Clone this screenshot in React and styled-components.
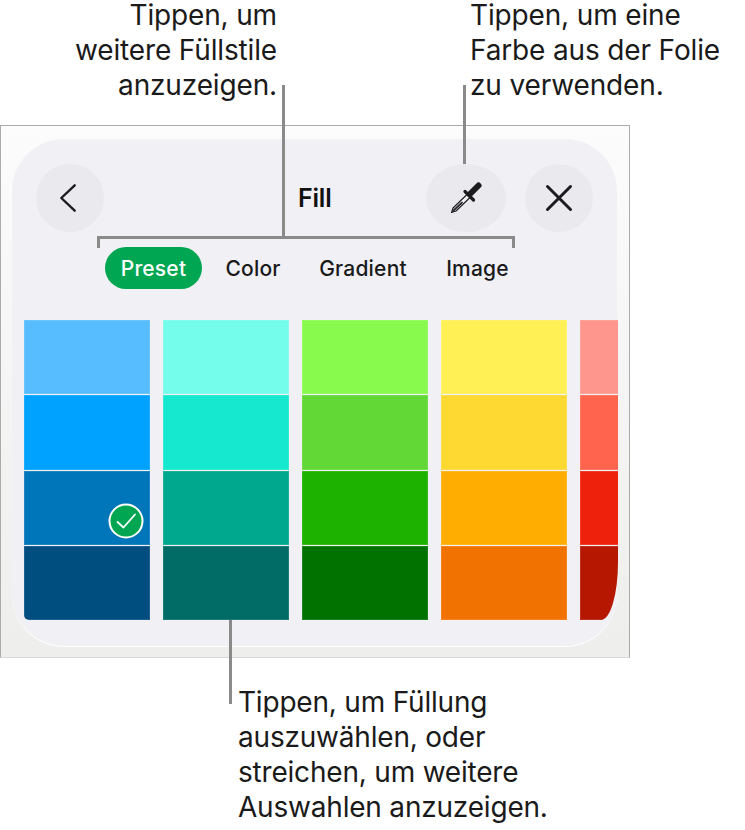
import React from "react";
import styled, { createGlobalStyle } from "styled-components";

const Global = createGlobalStyle`
  html, body { margin: 0; padding: 0; background: #fff; }
  body { font-family: Inter, "Liberation Sans", sans-serif; color: #1c1c1e; }
`;

const Page = styled.div`
  position: relative;
  width: 745px;
  height: 830px;
  overflow: hidden;
  display: flex;
  flex-direction: column;
`;

const TopNotes = styled.div`
  height: 125px;
  display: flex;
`;

const Note = styled.div`
  font-size: 28px;
  line-height: 35px;
  letter-spacing: -0.15px;
  color: #1a1a1a;
  white-space: nowrap;
  text-align: ${(p) => p.$align || "left"};
`;

const FirstLine = styled.span`
  display: block;
  line-height: 30px;
  margin-bottom: 2.5px;
`;

const LeftNote = styled(Note)`
  width: 277px;
`;

const RightNote = styled(Note)`
  margin-left: 193px;
`;

const Frame = styled.div`
  box-sizing: border-box;
  width: 630px;
  height: 533px;
  border: 1px solid #ababab;
  border-bottom-color: #d8d8d8;
  padding: 13px 12px 11px 11px;
  background: linear-gradient(180deg, #fcfcfc 0%, #f6f6f6 40%, #eeeeec 100%);
`;

const Panel = styled.div`
  box-sizing: border-box;
  height: 100%;
  border-radius: 52px;
  background: #f0f0f5;
  box-shadow: 0 1px 0 rgba(255, 255, 255, 0.9);
  padding: 25px 0 0 12px;
  display: flex;
  flex-direction: column;
`;

const Header = styled.div`
  height: 68px;
  display: flex;
  align-items: center;
  padding: 0 24px 0 12px;
`;

const CircleButton = styled.button`
  width: ${(p) => p.$w || 68}px;
  height: 68px;
  flex: none;
  padding: 0;
  border: 0;
  border-radius: 50%;
  background: #e9e9ee;
  display: flex;
  align-items: center;
  justify-content: center;
  margin-left: ${(p) => p.$ml || 0}px;
`;

const Title = styled.div`
  margin-left: 194px;
  width: 58px;
  font-size: 25px;
  font-weight: 600;
  letter-spacing: -0.2px;
  color: #111;
  white-space: nowrap;
`;

const Tabs = styled.div`
  display: flex;
  align-items: center;
  height: 42px;
  margin-top: 15px;
  margin-left: 81px;
`;

const Tab = styled.div`
  height: 42px;
  width: ${(p) => p.$w}px;
  flex: none;
  margin-left: ${(p) => p.$ml || 0}px;
  border-radius: 21px;
  display: flex;
  align-items: center;
  justify-content: center;
  font-size: 21px;
  font-weight: 500;
  letter-spacing: 0.2px;
  color: ${(p) => (p.$active ? "#fff" : "#1a1a1a")};
  background: ${(p) => (p.$active ? "#00a651" : "transparent")};
`;

const Strip = styled.div`
  margin-top: 31px;
  width: 594px;
  height: 300px;
  display: flex;
  gap: 13px;
  overflow: hidden;
  border-bottom-left-radius: 5px;
  border-bottom-right-radius: 17px 58px;
`;

const Column = styled.div`
  flex: none;
  width: 126px;
  display: flex;
  flex-direction: column;
  gap: 1px;
`;

const Swatch = styled.div`
  position: relative;
  box-sizing: border-box;
  height: 74.25px;
  background: ${(p) => p.$c};
  box-shadow: inset 0 0 0 1px rgba(255, 255, 255, 0.12);
`;

const Check = styled.svg`
  position: absolute;
  left: 84px;
  top: 32px;
`;

const BottomNote = styled(Note)`
  margin-left: 238px;
  margin-top: 27px;
  letter-spacing: -0.2px;
`;

const Leader = styled.div`
  position: absolute;
  background: #8a8a8a;
  left: ${(p) => p.$x}px;
  top: ${(p) => p.$y}px;
  width: ${(p) => p.$w}px;
  height: ${(p) => p.$h}px;
`;

const palette = [
  ["#58bdff", "#00a2ff", "#0076ba", "#004d80"],
  ["#73fdea", "#16e7cf", "#00a88e", "#006c65"],
  ["#88fa4e", "#61d836", "#1db100", "#017100"],
  ["#fff056", "#fed931", "#ffae00", "#f27200"],
  ["#ff968d", "#ff644e", "#ee220c", "#b51700"],
];

const Dropper = () => (
  <svg width="36" height="36" viewBox="0 0 36 36" fill="none">
    <path d="M19 14.5L5 28l-1.5 4.5L8 31l14-13.5z" fill="#f1f1f5" stroke="#1c1c1e" strokeWidth="1.1" strokeLinejoin="round" />
    <path d="M14 22.5L5 31" stroke="#2c2c2e" strokeWidth="1.8" strokeLinecap="round" />
    <path d="M17 11.5l8.5 8.5" stroke="#1c1c1e" strokeWidth="3.2" strokeLinecap="round" />
    <path d="M22 14l8.5-8.5" stroke="#1c1c1e" strokeWidth="6" strokeLinecap="round" />
  </svg>
);

export default function App() {
  return (
    <Page>
      <Global />
      <TopNotes>
        <LeftNote $align="right">
          <FirstLine>Tippen, um</FirstLine>
          weitere Füllstile
          <br />
          anzuzeigen.
        </LeftNote>
        <RightNote>
          <FirstLine>Tippen, um eine</FirstLine>
          Farbe aus der Folie
          <br />
          zu verwenden.
        </RightNote>
      </TopNotes>
      <Frame>
        <Panel>
          <Header>
            <CircleButton aria-label="Zurück">
              <svg width="24" height="32" viewBox="0 0 24 32" fill="none">
                <path d="M16.7 3.3L3.3 16l13.4 12.7" stroke="#1c1c1e" strokeWidth="2.4" strokeLinecap="round" strokeLinejoin="round" />
              </svg>
            </CircleButton>
            <Title>Fill</Title>
            <CircleButton $w={80} $ml={71} aria-label="Pipette">
              <Dropper />
            </CircleButton>
            <CircleButton $ml={19} aria-label="Schließen">
              <svg width="30" height="30" viewBox="0 0 30 30" fill="none">
                <path d="M3.5 3.5l23 23M26.5 3.5l-23 23" stroke="#1c1c1e" strokeWidth="3" strokeLinecap="round" />
              </svg>
            </CircleButton>
          </Header>
          <Tabs>
            <Tab $active $w={97}>Preset</Tab>
            <Tab $w={76} $ml={13}>Color</Tab>
            <Tab $w={110} $ml={17}>Gradient</Tab>
            <Tab $w={80} $ml={19.5}>Image</Tab>
          </Tabs>
          <Strip>
            {palette.map((col, i) => (
              <Column key={i}>
                {col.map((c, j) => (
                  <Swatch key={j} $c={c}>
                    {i === 0 && j === 2 && (
                      <Check width="36" height="36" viewBox="0 0 36 36" fill="none">
                        <circle cx="18" cy="18" r="16.5" fill="#00a651" stroke="#fff" strokeWidth="2" />
                        <path d="M9.5 19l6 5.5L27 11.5" stroke="#fff" strokeWidth="1.8" strokeLinecap="round" strokeLinejoin="round" />
                      </Check>
                    )}
                  </Swatch>
                ))}
              </Column>
            ))}
          </Strip>
        </Panel>
      </Frame>
      <BottomNote>
        Tippen, um Füllung
        <br />
        auszuwählen, oder
        <br />
        streichen, um weitere
        <br />
        Auswahlen anzuzeigen.
      </BottomNote>
      <Leader $x={282} $y={85} $w={3} $h={153} />
      <Leader $x={97} $y={236} $w={417} $h={3} />
      <Leader $x={97} $y={236} $w={3} $h={12} />
      <Leader $x={512} $y={236} $w={3} $h={12} />
      <Leader $x={463} $y={85} $w={3} $h={79} />
      <Leader $x={229} $y={620} $w={3} $h={84} />
    </Page>
  );
}
